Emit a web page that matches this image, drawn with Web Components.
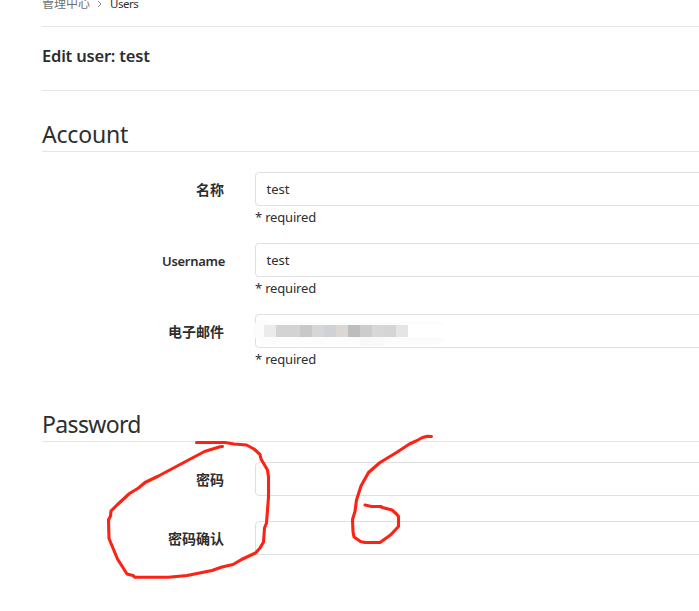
<!DOCTYPE html>
<html lang="zh-CN">
<head>
<meta charset="utf-8">
<title>Edit user: test</title>
<style>
html,body{margin:0;background:#fff}
body{width:699px;height:611px;overflow:hidden;position:relative;color:#2e2e2e;font-family:"Noto Sans","Noto Sans CJK SC",sans-serif}
</style>
</head>
<body>
<user-page></user-page>
<script>
function define(name, html, setup) {
  const template = document.createElement('template');
  template.innerHTML = html;
  customElements.define(name, class extends HTMLElement {
    constructor() {
      super();
      this.attachShadow({ mode: 'open' }).append(template.content.cloneNode(true));
    }
    connectedCallback() { if (setup) setup(this, this.shadowRoot); }
  });
}

define('bread-crumbs', `
<style>
:host{display:flex;align-items:center;height:26px;border-bottom:1px solid #e5e5e5;font-size:12px;line-height:16px;color:#707070}
.row{display:flex;align-items:center;height:16px;margin-top:-19px}
svg{width:5px;height:8px;margin:0 8px 0 7px}
b{font-weight:400;color:#2e2e2e;font-size:11.5px;letter-spacing:-.45px}
</style>
<div class="row"><slot></slot><svg viewBox="0 0 5 8"><path d="M1 1l3 3-3 3" fill="none" stroke="#888"/></svg><b><slot name="current"></slot></b></div>`);

define('page-title', `
<style>
:host{display:flex;align-items:center;height:63px;box-sizing:content-box;border-bottom:1px solid #e5e5e5}
h3{margin:0 0 5px;font-size:16.5px;font-weight:600;line-height:24px;letter-spacing:-.2px}
</style>
<h3><slot></slot></h3>`);

define('form-section', `
<style>
:host{display:block}
h2{margin:0;height:32px;border-bottom:1px solid #e5e5e5;font-size:23px;line-height:31px;font-weight:400;letter-spacing:var(--heading-spacing,-.2px)}
.rows{display:flex;flex-direction:column;padding-top:20px}
</style>
<h2><slot name="heading"></slot></h2><div class="rows"><slot></slot></div>`);

define('form-row', `
<style>
:host{display:grid;grid-template-columns:182px 1fr;column-gap:31px;height:59px}
:host([required]){height:71px}
label{text-align:right;font-size:14px;line-height:36px;font-weight:700;height:34px}
label.latin{font-size:13px;font-weight:600;letter-spacing:-.3px;padding-left:1px;margin-right:-1px}
.box{box-sizing:border-box;height:34px;width:460px;border:1px solid #dfdfdf;border-radius:4px;padding-left:10.5px;font-size:13px;line-height:32px}
.hint{font-size:13px;line-height:22px;letter-spacing:-.18px}
:host(:not([required])) .hint{display:none}
</style>
<label></label><div><div class="box"><slot></slot></div><div class="hint">* required</div></div>`,
(host, root) => {
  const label = root.querySelector('label');
  label.textContent = host.getAttribute('label');
  if (/^[A-Za-z]/.test(label.textContent)) label.className = 'latin';
});

define('masked-value', `
<style>
:host{display:block;position:relative;height:32px}
svg{position:absolute;left:-14.5px;top:-1px;width:205px;height:34px}
</style>
<svg viewBox="0 0 205 34" shape-rendering="crispEdges">
<path d="M7 6Q15 5 18 8H190V23H194Q192 30 182 31H20Q1 28 1 17Q1 9 7 6Z" fill="#fcfcfc"/>
<path d="M108 23h24v9h-24z" fill="#f9f9f9"/><path d="M35 11h155v12h-155z" fill="#fff"/>
<g class="cells"></g></svg>`,
(host, root) => {
  const colors = ['#ebebeb','#d4d3d2','#d2d3d5','#c8c8c9','#d5d6d8','#d0d1d4','#dcd7d3','#bcbebd','#cccccc','#d7d7da','#d3d6d5','#e5e5e5'];
  root.querySelector('.cells').innerHTML = colors.map((c, i) =>
    `<rect x="${12 + i * 12}" y="11" width="12" height="12" fill="${c}"/>`).join('');
});

define('red-marks', `
<style>
:host{position:absolute;left:0;top:0;width:699px;height:611px;pointer-events:none}
svg{display:block}
</style>
<svg width="699" height="611" fill="none" stroke="#fc2214" stroke-width="3.1" stroke-linecap="round" stroke-linejoin="round">
<path d="M196.5 442.5H225L234 444 246.500 445 254 449 260 454.500 261 459 267.500 470 268.500 477V497L266.500 523 264.500 528 263.500 542 260 548 255.500 553 241.500 559.500 233 564.500 222 567 212 570.500 187 575.500 168.500 577.300H135L133 575.500 127 574 117.500 559 109 538.500 108.500 520 110.500 516 111 511 117 505 129.500 493.500 138.500 488 145 482.500 158.500 476 180 464.500 204.500 451.500 220 446.700 222.500 446.500"/>
<path d="M431.500 436.500L427.500 436.300 422.500 437.500 416 441 409.500 444 396.500 452.500 380 462.500 368.500 472.500 361 486 356.500 500 355 511.500 352.500 519.500 353 531.500 354 537 360.500 541.500 365 542.500H380L390.500 535 398.500 526.500V516.500L396.500 514 392 510 382.500 507.500 380.500 506.500H371.500L365 505"/>
</svg>`);

define('user-page', `
<style>
:host{display:block;padding-left:42px;height:611px;overflow:hidden;box-sizing:border-box}
.account{margin-top:28px}
.password{margin-top:24px;--heading-spacing:-.65px}
</style>
<bread-crumbs>管理中心<span slot="current">Users</span></bread-crumbs>
<page-title>Edit user: test</page-title>
<form-section class="account"><span slot="heading">Account</span>
<form-row label="名称" required>test</form-row>
<form-row label="Username" required>test</form-row>
<form-row label="电子邮件" required><masked-value></masked-value></form-row>
</form-section>
<form-section class="password"><span slot="heading">Password</span>
<form-row label="密码"></form-row>
<form-row label="密码确认"></form-row>
</form-section>
<red-marks></red-marks>`);
</script>
</body>
</html>
